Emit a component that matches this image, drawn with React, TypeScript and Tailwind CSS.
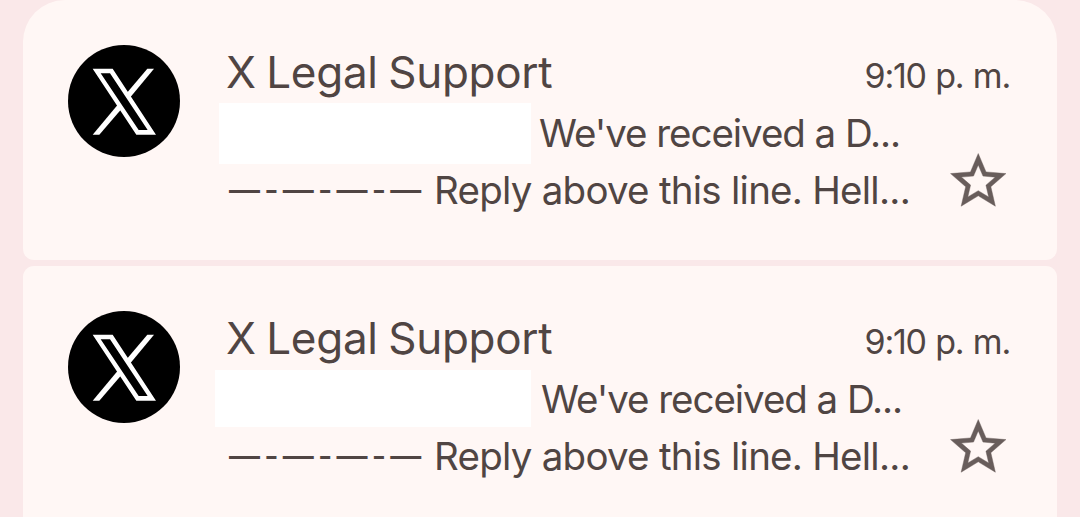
import clsx from 'clsx';

interface Mail {
  id: number;
  sender: string;
  time: string;
  subject: string;
  snippet: string;
  cardClass: string;
  redactClass: string;
}

const mails: Mail[] = [
  {
    id: 1,
    sender: 'X Legal Support',
    time: '9:10 p. m.',
    subject: "We've received a D...",
    snippet: 'Reply above this line. Hell...',
    cardClass: 'h-[260px] rounded-t-[42px] rounded-b-[11px]',
    redactClass: 'ml-[39px] mr-[8px] h-[61px] w-[312px]',
  },
  {
    id: 2,
    sender: 'X Legal Support',
    time: '9:10 p. m.',
    subject: "We've received a D...",
    snippet: 'Reply above this line. Hell...',
    cardClass: 'h-[266px] rounded-t-[11px]',
    redactClass: 'ml-[35px] mr-[10px] mt-px h-[57px] w-[316px]',
  },
];

function XAvatar() {
  return (
    <div className="size-[112px] shrink-0 overflow-hidden rounded-full bg-black">
      <svg className="size-full" viewBox="0 0 336 336" fill="#fff">
        <path fillRule="evenodd" d="M74 71H134L264 269H205ZM98 85L212 255H239L126 85Z" />
        <path d="M238 71H258L187 157L177 143Z" />
        <path d="M74 269H94L161 191L151 177Z" />
      </svg>
    </div>
  );
}

function StarIcon() {
  return (
    <svg
      className="size-[66.5px] shrink-0 text-[#685d5b]"
      viewBox="0 0 24 24"
      fill="currentColor"
      stroke="currentColor"
      strokeWidth={0.15}
    >
      <path d="M22 9.24l-7.19-.62L12 2 9.19 8.63 2 9.24l5.46 4.73L5.82 21 12 17.27 18.18 21l-1.63-7.03L22 9.24zM12 15.4l-3.76 2.27 1-4.28-3.32-2.88 4.38-.38L12 6.1l1.71 4.04 4.38.38-3.32 2.88 1 4.28L12 15.4z" />
    </svg>
  );
}

function MailCard({ mail }: { mail: Mail }) {
  return (
    <article className={clsx('flex shrink-0 bg-[#fff7f5] pl-[45px] pt-[45px]', mail.cardClass)}>
      <XAvatar />
      <div className="flex min-w-0 flex-1 flex-col whitespace-nowrap">
        {/* Sender and time */}
        <div className="flex h-[58px] items-baseline justify-between pl-[46px] pr-[47px]">
          <h2 className="text-[44px] leading-[54px] tracking-[-0.3px] [word-spacing:-1.5px]">{mail.sender}</h2>
          <time className="text-[34px] leading-[54px] tracking-[-1.2px] [word-spacing:1px]">{mail.time}</time>
        </div>

        {/* Subject */}
        <div className="flex h-[62px] items-start">
          <div className={clsx('shrink-0 bg-white', mail.redactClass)} />
          <p className="text-[38.5px] leading-[60px] tracking-[-1.05px]">{mail.subject}</p>
        </div>

        {/* Snippet and star */}
        <div className="flex h-[50px] items-start pl-[48px]">
          <div className="flex w-[717px] items-start leading-[50px]">
            <span className="w-[206px] pl-px text-[31px] font-medium tracking-[4.2px]">—-—-—-—</span>
            <p className="text-[38.5px] tracking-[-0.75px]">{mail.snippet}</p>
          </div>
          <div className="-mt-[17px]">
            <StarIcon />
          </div>
        </div>
      </div>
    </article>
  );
}

export default function App() {
  return (
    <main className="flex h-[517px] flex-col gap-[6px] overflow-hidden bg-[#fae8e9] px-[23px] font-['Inter',sans-serif] text-[#504543]">
      {mails.map((mail) => (
        <MailCard key={mail.id} mail={mail} />
      ))}
    </main>
  );
}
